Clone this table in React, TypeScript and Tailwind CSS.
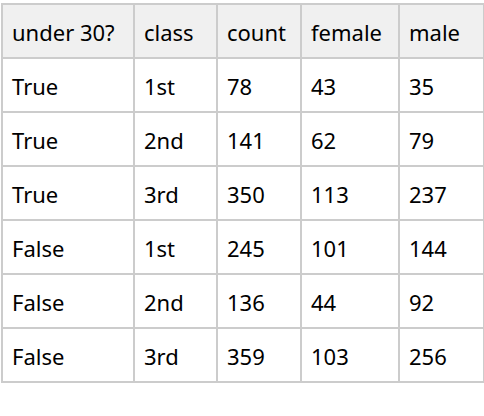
import React from 'react';

const headers = ['under 30?', 'class', 'count', 'female', 'male'];

const rows = [
    ['True', '1st', '78', '43', '35'],
    ['True', '2nd', '141', '62', '79'],
    ['True', '3rd', '350', '113', '237'],
    ['False', '1st', '245', '101', '144'],
    ['False', '2nd', '136', '44', '92'],
    ['False', '3rd', '359', '103', '256'],
];

const widths = ['w-[132px]', 'w-[83px]', 'w-[84px]', 'w-[98px]', 'w-[85px]'];

export default function App() {
    return (
        <div className="w-[484px] h-[416px] bg-white pt-[3px] pl-[1px]" style={{ fontFamily: '"Noto Sans", sans-serif' }}>
            <table className="table-fixed border-collapse border-2 border-[#cccccc] w-[482px] text-[22px] text-black">
                <colgroup>
                    {widths.map((w, i) => (
                        <col key={i} className={w} />
                    ))}
                </colgroup>
                <thead>
                    <tr className="h-[54px] bg-[#f0f0f0]">
                        {headers.map((h) => (
                            <th key={h} className="border-2 border-[#cccccc] px-[9px] pt-[3px] pb-0 text-left font-normal whitespace-nowrap">
                                {h}
                            </th>
                        ))}
                    </tr>
                </thead>
                <tbody>
                    {rows.map((r, i) => (
                        <tr key={i} className="h-[54px]">
                            {r.map((c, j) => (
                                <td key={j} className="border-2 border-[#cccccc] px-[9px] pt-[3px] pb-0 text-left">
                                    {c}
                                </td>
                            ))}
                        </tr>
                    ))}
                </tbody>
            </table>
        </div>
    );
}
